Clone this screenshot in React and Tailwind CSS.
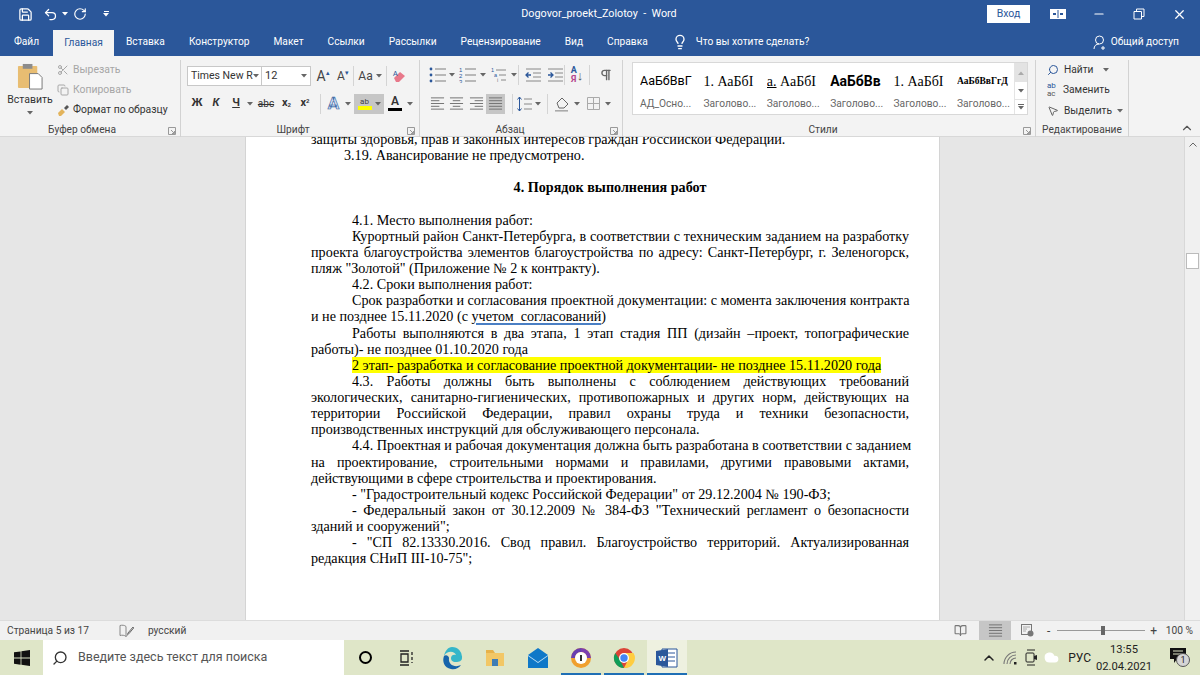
import React from 'react';
import { Save, Undo2, RotateCw, Lightbulb, X, Minus, Scissors, Search, ChevronUp, Cloud, Copy, MousePointer2, Pilcrow, BookOpen } from 'lucide-react';

const UI = { fontFamily: 'Roboto, "Noto Sans", sans-serif' };

const Caret = ({ color = '#666' }) => (
  <svg width="6" height="4" viewBox="0 0 6 4" className="shrink-0"><path d="M0 0h6L3 3.5z" fill={color} /></svg>
);

const Sep = () => <div className="w-px h-[20px] bg-[#d4d4d4] shrink-0" />;

const Launcher = () => (
  <svg width="8" height="8" viewBox="0 0 8 8" className="shrink-0"><path d="M.5 7.5v-7h7v7zM3 3l3.5 3.5M6.5 4v2.5H4" fill="none" stroke="#999" /></svg>
);

const Group = ({ width, label, labelClass = 'justify-center', launcher, children }) => (
  <div className="flex flex-col shrink-0 border-r border-[#d2d2d2] h-[77px] mt-[4px] relative" style={{ width }}>
    <div className="flex-1 min-h-0">{children}</div>
    <div className={`flex items-center h-[14px] text-[10.2px] text-[#444] ${labelClass}`}>{label}</div>
    {launcher && <div className="absolute right-[4px] bottom-[2px] flex"><Launcher /></div>}
  </div>
);

const Slot = ({ w, className = '', children }) => (
  <div className={`flex items-center justify-center shrink-0 h-[20px] ${className}`} style={{ width: w }}>{children}</div>
);

const Lines = ({ kind }) => {
  const rows = {
    left: ['M1 2h14', 'M1 5h9', 'M1 8h14', 'M1 11h9', 'M1 14h14'],
    center: ['M1 2h14', 'M4 5h8', 'M1 8h14', 'M4 11h8', 'M1 14h14'],
    right: ['M1 2h14', 'M6 5h9', 'M1 8h14', 'M6 11h9', 'M1 14h14'],
    just: ['M1 2h14', 'M1 5h14', 'M1 8h14', 'M1 11h14', 'M1 14h14'],
  }[kind];
  return (
    <svg width="15" height="15" viewBox="0 0 16 16">
      {rows.map((d) => <path key={d} d={d} stroke="#777" strokeWidth="1.1" />)}
    </svg>
  );
};

const ListIcon = ({ kind }) => (
  <svg width="17" height="16" viewBox="0 0 17 16">
    {[2, 8, 14].map((y, i) => (
      kind === 'bullet'
        ? <circle key={y} cx="2" cy={y} r="1.4" fill="#2b579a" />
        : <text key={y} x="0" y={y + 2.5} fontSize="6" fill="#2b579a" fontFamily="Liberation Sans">{i + 1}</text>
    ))}
    {[2, 8, 14].map((y) => <path key={y} d={`M6 ${y}h11`} stroke="#888" strokeWidth="1.1" />)}
  </svg>
);

const MultiIcon = () => (
  <svg width="15" height="16" viewBox="0 0 15 16">
    <text x="0" y="5" fontSize="5.5" fill="#2b579a" fontFamily="Liberation Sans">1</text>
    <text x="3" y="10" fontSize="5.5" fill="#2b579a" fontFamily="Liberation Sans">a</text>
    <text x="6" y="15" fontSize="5.5" fill="#777" fontFamily="Liberation Sans">i</text>
    <path d="M5 3h10M8 8h7M10 13h5" stroke="#888" />
  </svg>
);

const IndentIcon = ({ dir }) => (
  <svg width="16" height="14" viewBox="0 0 16 14">
    <path d="M1 1h15M8 5h8M8 9h8M1 13h15" stroke="#888" />
    {dir === 'out'
      ? <path d="M6 7H1m2.5-2.5L1 7l2.5 2.5" stroke="#2b579a" strokeWidth="1.3" fill="none" />
      : <path d="M1 7h5M3.5 4.5 6 7 3.5 9.5" stroke="#2b579a" strokeWidth="1.3" fill="none" />}
  </svg>
);

const StyleItem = ({ sample, label, cls }) => (
  <div className="w-[63.4px] shrink-0 flex flex-col pl-[7px] overflow-hidden">
    <div className={`h-[36px] flex items-center whitespace-nowrap overflow-hidden text-black ${cls}`}>{sample}</div>
    <div className="text-[10.2px] text-[#666] whitespace-nowrap leading-[10px]">{label}</div>
  </div>
);

const SERIF = '[font-family:"Liberation_Serif",serif]';

const Ribbon = () => (
  <div className="h-[81px] bg-[#f3f3f3] flex shrink-0 border-b border-[#d8d8d8] text-[#444]" style={UI}>
    <Group width={181} label="Буфер обмена" launcher labelClass="justify-center pr-[16px]">
      <div className="flex">
        <div className="w-[57px] flex flex-col items-center pt-[3px] pl-[3px]">
          <svg width="27" height="27" viewBox="0 0 28 28">
            <rect x="1" y="3" width="20" height="23" rx="1" fill="#e8bd72" />
            <rect x="6" y="1" width="10" height="5" fill="#8c8c8c" />
            <path d="M13 11h9l4 4v12H13z" fill="#fff" stroke="#777" />
          </svg>
          <div className="text-[10.5px] leading-[14px] mt-[3px] text-[#333]">Вставить</div>
          <div className="mt-[4px]"><Caret /></div>
        </div>
        <div className="flex flex-col text-[10.4px] leading-[20px]">
          <div className="flex items-center gap-[4px] text-[#a6a6a6] h-[20px]"><Scissors size={12} color="#a8a8a8" />Вырезать</div>
          <div className="flex items-center gap-[4px] text-[#a6a6a6] h-[20px]"><Copy size={12} color="#a8a8a8" />Копировать</div>
          <div className="flex items-center gap-[3px] text-[#333] h-[20px]">
            <svg width="13" height="13" viewBox="0 0 13 13"><path d="M1 9l4-4 3 3-4 4H2z" fill="#e3b45c" /><path d="M7 4l3-3 2 2-3 3z" fill="#555" /></svg>
            Формат по образцу
          </div>
        </div>
      </div>
    </Group>

    <Group width={239} label="Шрифт" launcher labelClass="justify-center pr-[14px]">
      <div className="flex items-center h-[22px] mt-[5px] pl-[6px]">
        <div className="w-[75px] h-[20px] bg-white border border-[#c8c8c8] flex items-center justify-between px-[3px] text-[10.5px] text-[#333] whitespace-nowrap overflow-hidden">
          Times New R<Caret />
        </div>
        <div className="w-[49px] h-[20px] bg-white border border-l-0 border-[#c8c8c8] flex items-center justify-between px-[3px] text-[11px] text-[#333]">
          12<Caret />
        </div>
        <Slot w={20} className="ml-[2px] text-[14px] text-[#444]">A<sup className="text-[#2b579a] text-[7px]">▴</sup></Slot>
        <Slot w={20} className="text-[12px] text-[#444]">A<sup className="text-[#2b579a] text-[7px]">▾</sup></Slot>
        <Sep />
        <Slot w={32} className="gap-[3px] text-[12px]">Aa<Caret /></Slot>
        <Sep />
        <Slot w={24}>
          <svg width="15" height="15" viewBox="0 0 15 15"><path d="M2 9l6-6 5 4-6 6H4z" fill="#e8788a" /><text x="1" y="7" fontSize="7" fill="#2b579a" fontFamily="Liberation Sans">A</text></svg>
        </Slot>
      </div>
      <div className="flex items-center h-[21px] mt-[6px] pl-[7px] text-[#333]">
        <Slot w={18} className="font-bold text-[11px]">Ж</Slot>
        <Slot w={20} className="font-bold italic text-[11px]">К</Slot>
        <Slot w={20} className="font-bold underline text-[11px]">Ч</Slot>
        <Slot w={8}><Caret /></Slot>
        <Slot w={24} className="text-[10px] line-through">abc</Slot>
        <Slot w={17} className="font-bold text-[11px]">x<sub className="text-[6px]">2</sub></Slot>
        <Slot w={20} className="font-bold text-[11px]">x<sup className="text-[6px]">2</sup></Slot>
        <div className="w-[5px]" />
        <Sep />
        <Slot w={19} className="ml-[3px]"><span className="text-[17px] font-bold text-[#cfe0f5] leading-none [-webkit-text-stroke:0.6px_#2b579a]">A</span></Slot>
        <Slot w={10}><Caret /></Slot>
        <div className="w-[30px] h-[20px] bg-[#c6c6c6] flex items-center justify-center gap-[3px] ml-[1px]">
          <div className="flex flex-col items-center">
            <span className="text-[8px] leading-[9px] text-[#444]">ab</span>
            <div className="w-[14px] h-[4px] bg-[#ffff00]" />
          </div>
          <Caret />
        </div>
        <div className="w-[20px] flex flex-col items-center ml-[1px]">
          <span className="text-[12px] leading-[11px] font-semibold text-[#333]">A</span>
          <div className="w-[14px] h-[3px] bg-black mt-[1px]" />
        </div>
        <Slot w={9}><Caret /></Slot>
      </div>
    </Group>

    <Group width={203} label="Абзац" launcher labelClass="justify-center pr-[22px]">
      <div className="flex items-center h-[22px] mt-[4px] pl-[7px]">
        <Slot w={20}><ListIcon kind="bullet" /></Slot>
        <Slot w={10}><Caret /></Slot>
        <Slot w={21}><ListIcon kind="num" /></Slot>
        <Slot w={9}><Caret /></Slot>
        <Slot w={22}><MultiIcon /></Slot>
        <Slot w={9}><Caret /></Slot>
        <div className="w-[2px]" />
        <Sep />
        <Slot w={24} className="ml-[2px]"><IndentIcon dir="out" /></Slot>
        <Slot w={19}><IndentIcon dir="in" /></Slot>
        <div className="w-[3px]" />
        <Sep />
        <Slot w={24} className="text-[9px] font-bold leading-[9px]">
          <div className="flex flex-col items-center text-[#2b579a]"><span>А</span><span className="text-[#b5478e]">Я</span></div>
          <span className="text-[#555] text-[13px] font-normal">↓</span>
        </Slot>
        <Sep />
        <Slot w={32}><Pilcrow size={14} color="#666" strokeWidth={2.4} /></Slot>
      </div>
      <div className="flex items-center h-[21px] mt-[7px] pl-[7px]">
        <Slot w={20}><Lines kind="left" /></Slot>
        <Slot w={19}><Lines kind="center" /></Slot>
        <Slot w={20}><Lines kind="right" /></Slot>
        <div className="w-[19px] h-[20px] bg-[#c6c6c6] flex items-center justify-center"><Lines kind="just" /></div>
        <div className="w-[7px]" />
        <Sep />
        <Slot w={22}>
          <svg width="15" height="16" viewBox="0 0 15 16"><path d="M2.5 1v14M.5 3.5l2-2.5 2 2.5M.5 12.5l2 2.5 2-2.5" stroke="#2b579a" fill="none" /><path d="M7 3h8M7 8h8M7 13h8" stroke="#888" /></svg>
        </Slot>
        <Slot w={6}><Caret /></Slot>
        <div className="w-[6px]" />
        <Sep />
        <Slot w={22} className="ml-[3px]">
          <svg width="17" height="16" viewBox="0 0 17 16"><path d="M3 7l5-5 6 6-4 4H5z" fill="none" stroke="#666" /><path d="M1 14h13v1.6H1z" fill="#aaa" /></svg>
        </Slot>
        <Slot w={8}><Caret /></Slot>
        <Slot w={20} className="ml-[2px]">
          <svg width="13" height="13" viewBox="0 0 13 13"><path d="M.5.5h12v12H.5zM6.500 .5v12M.5 6.500h12" fill="none" stroke="#aaa" /></svg>
        </Slot>
        <Slot w={9}><Caret /></Slot>
      </div>
    </Group>

    <Group width={413} label="Стили" launcher labelClass="justify-center pr-[12px]">
      <div className="flex ml-[9px] mt-[2px] w-[396px] h-[53px] bg-white border border-[#d8d8d8]">
        <div className="flex flex-1 min-w-0">
          <StyleItem sample="АаБбВвГ" label="АД_Осно..." cls="text-[12.5px]" />
          <StyleItem sample="1. АаБбI" label="Заголово..." cls={`text-[14px] ${SERIF}`} />
          <StyleItem sample={<><u>а.</u>&nbsp;АаБбI</>} label="Заголово..." cls={`text-[14px] ${SERIF}`} />
          <StyleItem sample="АаБбВв" label="Заголово..." cls="text-[14px] font-bold" />
          <StyleItem sample="1. АаБбI" label="Заголово..." cls={`text-[14px] ${SERIF}`} />
          <StyleItem sample="АаБбВвГгД" label="Заголово..." cls={`text-[9.5px] font-bold ${SERIF}`} />
        </div>
        <div className="w-[13px] flex flex-col shrink-0 border-l border-[#e4e4e4]">
          <div className="h-[19px] bg-[#e3e3e3] flex items-center justify-center"><svg width="6" height="4" viewBox="0 0 6 4"><path d="M0 4h6L3 .5z" fill="#aaa" /></svg></div>
          <div className="h-[17px] flex items-center justify-center"><Caret /></div>
          <div className="flex-1 flex flex-col items-center justify-center gap-[1px] border-t border-[#e4e4e4]"><div className="w-[6px] h-px bg-[#666]" /><Caret /></div>
        </div>
      </div>
    </Group>

    <Group width={93} label="Редактирование">
      <div className="flex flex-col pl-[11px] text-[10.2px] text-[#333]">
        <div className="flex items-center h-[20px] gap-[5px]">
          <Search size={12} color="#2b579a" className="-scale-x-100" />Найти<span className="ml-[5px]"><Caret /></span>
        </div>
        <div className="flex items-center h-[20px] gap-[3px]">
          <span className="text-[8px] leading-[8px] text-[#2b579a] w-[13px]">ab<br /><span className="text-[#555]">ac</span></span>Заменить
        </div>
        <div className="flex items-center h-[21px] gap-[5px]">
          <MousePointer2 size={12} color="#666" />Выделить<Caret />
        </div>
      </div>
    </Group>

    <div className="flex-1 flex items-end justify-end pr-[6px] pb-[1px]"><ChevronUp size={14} color="#555" /></div>
  </div>
);

const Line = ({ indent = 0, j, children }) => (
  <div
    className={`h-[16.13px] leading-[16.13px] whitespace-pre ${j ? 'whitespace-normal [text-align:justify] [text-align-last:justify]' : ''}`}
    style={{ paddingLeft: indent }}
  >
    {children}
  </div>
);

const Doc = () => (
  <div className="flex-1 min-h-0 bg-[#e6e6e6] flex overflow-hidden">
    <div className="w-[245px] shrink-0" />
    <div className="w-[695px] shrink-0 bg-white pl-[65px] pr-[30px] border-x border-[#d4d4d4] text-[14.15px] text-black" style={{ fontFamily: '"Liberation Serif", serif' }}>
      <div className="-mt-[6px]">
        <Line>защиты здоровья, прав и законных интересов граждан Российской Федерации.</Line>
        <Line indent={33}>3.19. Авансирование не предусмотрено.</Line>
        <Line />
        <Line><div className="text-center font-bold">4. Порядок выполнения работ</div></Line>
        <Line />
        <Line indent={41}>4.1. Место выполнения работ:</Line>
        <Line indent={41} j>Курортный район Санкт-Петербурга, в соответствии с техническим заданием на разработку</Line>
        <Line j>проекта благоустройства элементов благоустройства по адресу: Санкт-Петербург, г. Зеленогорск,</Line>
        <Line>пляж "Золотой" (Приложение № 2 к контракту).</Line>
        <Line indent={41}>4.2. Сроки выполнения работ:</Line>
        <Line indent={41} j>Срок разработки и согласования проектной документации: с момента заключения контракта</Line>
        <Line>и не позднее 15.11.2020 (с <span className="underline decoration-[#4a7fc4] decoration-2 underline-offset-2">учетом  согласований</span>)</Line>
        <Line indent={41} j>Работы выполняются в два этапа, 1 этап стадия ПП (дизайн –проект, топографические</Line>
        <Line>работы)- не позднее 01.10.2020 года</Line>
        <Line indent={41}><span className="bg-[#ffff00] inline-block">2 этап- разработка и согласование проектной документации- не позднее 15.11.2020 года</span></Line>
        <Line indent={41} j>4.3. Работы должны быть выполнены с соблюдением действующих требований</Line>
        <Line j>экологических, санитарно-гигиенических, противопожарных и других норм, действующих на</Line>
        <Line j>территории Российской Федерации, правил охраны труда и техники безопасности,</Line>
        <Line>производственных инструкций для обслуживающего персонала.</Line>
        <Line indent={41} j>4.4. Проектная и рабочая документация должна быть разработана в соответствии с заданием</Line>
        <Line j>на проектирование, строительными нормами и правилами, другими правовыми актами,</Line>
        <Line>действующими в сфере строительства и проектирования.</Line>
        <Line indent={41}>- "Градостроительный кодекс Российской Федерации" от 29.12.2004 № 190-ФЗ;</Line>
        <Line indent={41} j>- Федеральный закон от 30.12.2009 № 384-ФЗ "Технический регламент о безопасности</Line>
        <Line>зданий и сооружений";</Line>
        <Line indent={41} j>- "СП 82.13330.2016. Свод правил. Благоустройство территорий. Актуализированная</Line>
        <Line>редакция СНиП III-10-75";</Line>
      </div>
    </div>
    <div className="flex-1" />
    <div className="w-[16px] shrink-0 bg-[#f0f0f0] border-l border-[#d8d8d8] flex flex-col items-center">
      <div className="h-[14px] flex items-center"><svg width="8" height="5" viewBox="0 0 8 5"><path d="M.5 4.500 4 1l3.500 3.500" stroke="#666" fill="none" /></svg></div>
      <div className="w-[13px] h-[16px] bg-white border border-[#bbb] mt-[102px]" />
    </div>
  </div>
);

const TaskIcon = ({ active, underline, className = '', children }) => (
  <div className={`w-[40px] h-[35px] shrink-0 flex items-center justify-center relative ${active ? 'bg-[#eef1e0]' : ''} ${className}`}>
    {children}
    {underline && <div className="absolute left-0 right-0 bottom-0 h-[2px] bg-[#1f6fb5]" />}
  </div>
);

const Taskbar = () => (
  <div className="h-[35px] bg-[#dfe6c8] flex items-center shrink-0" style={UI}>
    <div className="w-[43px] flex justify-center">
      <svg width="16" height="16" viewBox="0 0 16 16" fill="#111"><path d="M0 2.300 6.600 1.400v6.200H0zM7.400 1.300 16 0v7.600H7.400zM0 8.400h6.600v6.300L0 13.700zM7.400 8.400H16V16l-8.600-1.200z" /></svg>
    </div>
    <div className="w-[301px] h-[35px] bg-white flex items-center pl-[9px] gap-[10px] text-[12.5px] text-[#555]">
      <Search size={16} color="#333" className="-scale-x-100" />
      Введите здесь текст для поиска
    </div>
    <div className="flex ml-[1px] gap-[3px]">
      <TaskIcon><div className="w-[13px] h-[13px] rounded-full border-2 border-black" /></TaskIcon>
      <TaskIcon className="-ml-[2px]">
        <svg width="15" height="16" viewBox="0 0 15 16"><path d="M1 1h9M1 15h9M2 4h7v8H2zM13 2v3M13 7v3M13 12v1" fill="none" stroke="#222" strokeWidth="1.3" /></svg>
      </TaskIcon>
      <TaskIcon className="ml-[3px]">
        <svg width="22" height="24" viewBox="0 0 22 24"><path d="M11 1a10 10 0 0 1 10 11c0 3-3 4-6 4-4 0-5-2-5-4 0-3 3-4 5-3-1-4-9-5-12 1C4 5 7 1 11 1z" fill="#35b6c9" /><path d="M3 10c-2 5 0 12 7 13 4 1 8-1 10-4-6 3-13 0-12-7 0-2-3-4-5-2z" fill="#1664ab" /></svg>
      </TaskIcon>
      <TaskIcon>
        <svg width="20" height="18" viewBox="0 0 20 18"><path d="M1 1h7l2 3H1z" fill="#e7b24a" /><path d="M1 4h18v13H1z" fill="#f2c766" /><path d="M7 10h6v7H7z" fill="#3f7db5" /></svg>
      </TaskIcon>
      <TaskIcon>
        <svg width="22" height="20" viewBox="0 0 22 20"><path d="M1 7 11 0l10 7v13H1z" fill="#0f78c8" /><path d="M1 7l10 7 10-7v1l-10 7L1 8z" fill="#bfe0f5" /></svg>
      </TaskIcon>
      <TaskIcon underline>
        <svg width="22" height="22" viewBox="0 0 22 22"><circle cx="11" cy="11" r="10" fill="#f0a02e" /><path d="M11 1a10 10 0 0 1 10 10h-4a6 6 0 0 0-6-6z" fill="#7b3fb0" /><path d="M1 11A10 10 0 0 1 11 1v4a6 6 0 0 0-6 6z" fill="#6a3fb0" /><circle cx="11" cy="11" r="6" fill="#fff" /><path d="M10 8h2v6h-2z" fill="#333" /></svg>
      </TaskIcon>
      <TaskIcon underline>
        <svg width="22" height="22" viewBox="0 0 22 22"><circle cx="11" cy="11" r="10" fill="#db4437" /><path d="M11 21a10 10 0 0 1-8.700-15L7 13l4 8z" fill="#0f9d58" /><path d="M11 6h9.500A10 10 0 0 1 11 21l4-8z" fill="#ffcd40" /><circle cx="11" cy="11" r="5" fill="#fff" /><circle cx="11" cy="11" r="3.700" fill="#4285f4" /></svg>
      </TaskIcon>
      <TaskIcon active underline>
        <svg width="22" height="20" viewBox="0 0 22 20"><path d="M6 1h15v18H6z" fill="#fff" stroke="#2b579a" /><path d="M11 5h8M11 9h8M11 13h8" stroke="#2b579a" /><path d="M0 3l12-2v18L0 17z" fill="#2b579a" /><text x="2.500" y="13" fontSize="8" fontWeight="700" fill="#fff" fontFamily="Liberation Sans">W</text></svg>
      </TaskIcon>
    </div>
    <div className="flex-1" />
    <div className="flex items-center text-[#222]">
      <ChevronUp size={16} color="#222" strokeWidth={2.2} />
      <svg width="14" height="14" viewBox="0 0 14 14" className="ml-[6px]">
        <path d="M1 13A12 12 0 0 1 13 1M4 13a9 9 0 0 1 9-9M7 13a6 6 0 0 1 6-6" fill="none" stroke="#777" strokeWidth="1.1" />
        <path d="M11 11h2.500v2.500H11z" fill="#222" />
      </svg>
      <svg width="13" height="17" viewBox="0 0 13 17" className="ml-[8px]"><path d="M2 1h8M2 16h8" stroke="#222" /><rect x="1" y="4" width="8" height="9" rx="1" fill="none" stroke="#222" /><path d="M9 7l3-1v5l-3-1z" fill="#222" /></svg>
      <Cloud size={15} color="#fff" fill="#fff" className="ml-[6px]" />
      <span className="ml-[9px] text-[12px]">РУС</span>
      <div className="ml-[4px] w-[58px] text-center text-[11.2px] leading-[17px] text-[#222]">13:55<br />02.04.2021</div>
      <div className="w-[45px] flex justify-center relative h-[24px] ml-[2px]">
        <svg width="16" height="16" viewBox="0 0 16 16" className="mt-[2px]"><path d="M0 0h16v11H7l-3 4v-4H0z" fill="#111" /><path d="M3 3h10M3 6h10" stroke="#dfe6c8" /></svg>
        <div className="absolute left-[21px] top-[7px] w-[14px] h-[14px] rounded-full bg-[#d5d5d5] border border-[#555] text-[9px] leading-[12px] text-center">1</div>
      </div>
    </div>
  </div>
);

const App = () => {
  const tabs = ['Вставка', 'Конструктор', 'Макет', 'Ссылки', 'Рассылки', 'Рецензирование', 'Вид', 'Справка'];
  return (
    <div className="w-[1200px] h-[675px] flex flex-col overflow-hidden">
      <div className="bg-[#2b579a] shrink-0 text-white" style={UI}>
        <div className="h-[28px] flex items-center relative">
          <Save size={15} className="ml-[18px]" />
          <Undo2 size={15} className="ml-[10px]" />
          <span className="ml-[4px]"><Caret color="#fff" /></span>
          <RotateCw size={14} className="ml-[5px]" />
          <div className="ml-[16px] flex flex-col items-center gap-[1px]"><div className="w-[5px] h-px bg-white" /><Caret color="#fff" /></div>
          <div className="absolute left-0 right-[2px] top-0 h-full flex items-center justify-center text-[10.8px] pointer-events-none">Dogovor_proekt_Zolotoy&nbsp; -&nbsp; Word</div>
          <div className="ml-auto mr-[170px] w-[43px] h-[18px] bg-white text-[#2b579a] text-[10.5px] flex items-center justify-center">Вход</div>
          <div className="absolute left-[1050px] flex"><svg width="16" height="10" viewBox="0 0 16 10"><rect width="16" height="10" fill="#fff" /><path d="M8 1v8" stroke="#2b579a" /><path d="M3 5h3M10 5h3" stroke="#2b579a" strokeWidth="2" /></svg></div>
          <Minus size={14} className="absolute left-[1092px]" />
          <svg width="12" height="12" viewBox="0 0 12 12" className="absolute left-[1133px]"><path d="M1 3.500h7.500V11H1zM3.500 3.500V1H11v7.500H8.500" fill="none" stroke="#fff" /></svg>
          <X size={15} className="absolute left-[1172px]" />
        </div>
        <div className="h-[28px] flex items-end text-[10.2px]">
          <div className="w-[53px] h-[28px] flex items-center justify-center">Файл</div>
          <div className="w-[61px] h-[26px] bg-[#f3f3f3] text-[#2b579a] flex items-center justify-center">Главная</div>
          {tabs.map((t) => (
            <div key={t} className="h-[28px] flex items-center px-[12px]">{t}</div>
          ))}
          <Lightbulb size={16} className="ml-[12px] mb-[6px]" />
          <div className="h-[28px] flex items-center ml-[8px]">Что вы хотите сделать?</div>
          <div className="ml-auto mr-[21px] h-[28px] flex items-center gap-[3px]">
            <svg width="15" height="15" viewBox="0 0 15 15"><circle cx="6.500" cy="5" r="4" fill="none" stroke="#fff" /><path d="M1 14c0-3 2-5 5-5M10 11v4M8 13h4" fill="none" stroke="#fff" /></svg>
            Общий доступ
          </div>
        </div>
      </div>
      <Ribbon />
      <Doc />
      <div className="h-[20px] bg-[#f1f1f1] flex items-center shrink-0 text-[10.2px] text-[#444] border-t border-[#dcdcdc]" style={UI}>
        <span className="ml-[7px]">Страница 5 из 17</span>
        <svg width="15" height="13" viewBox="0 0 15 13" className="ml-[30px]"><path d="M7 2.500C5.500 1 3 1 1 1.500v10c2-.5 4.500-.5 6 1 .5-.5 1-.8 1.500-1M7 2.500v10" fill="none" stroke="#888" /><path d="M9 9l5-6 .8.8-5 6L8.500 10.500z" fill="none" stroke="#666" /></svg>
        <span className="ml-[14px]">русский</span>
        <div className="ml-auto flex items-center h-[20px]">
          <BookOpen size={13} color="#777" className="mr-[12px]" />
          <div className="w-[32px] h-[20px] bg-[#c6c6c6] flex items-center justify-center"><Lines kind="just" /></div>
          <svg width="13" height="13" viewBox="0 0 13 13" className="ml-[10px] mr-[13px]"><rect x=".5" y=".5" width="10" height="10" fill="none" stroke="#777" /><path d="M2 3h7M2 5h4M2 7h3" stroke="#aaa" /><circle cx="9.500" cy="9.500" r="3" fill="#777" /></svg>
          <div className="flex items-center w-[110px]">
            <span className="text-[#444] text-[12px] w-[10px]">-</span>
            <div className="flex-1 h-px bg-[#999] relative">
              <div className="absolute left-[44px] -top-[4px] w-[4px] h-[9px] bg-[#666]" />
            </div>
            <span className="text-[#444] text-[12px] w-[12px] text-right">+</span>
          </div>
          <span className="w-[36px] text-right mr-[7px]">100 %</span>
        </div>
      </div>
      <Taskbar />
    </div>
  );
};

export default App;
